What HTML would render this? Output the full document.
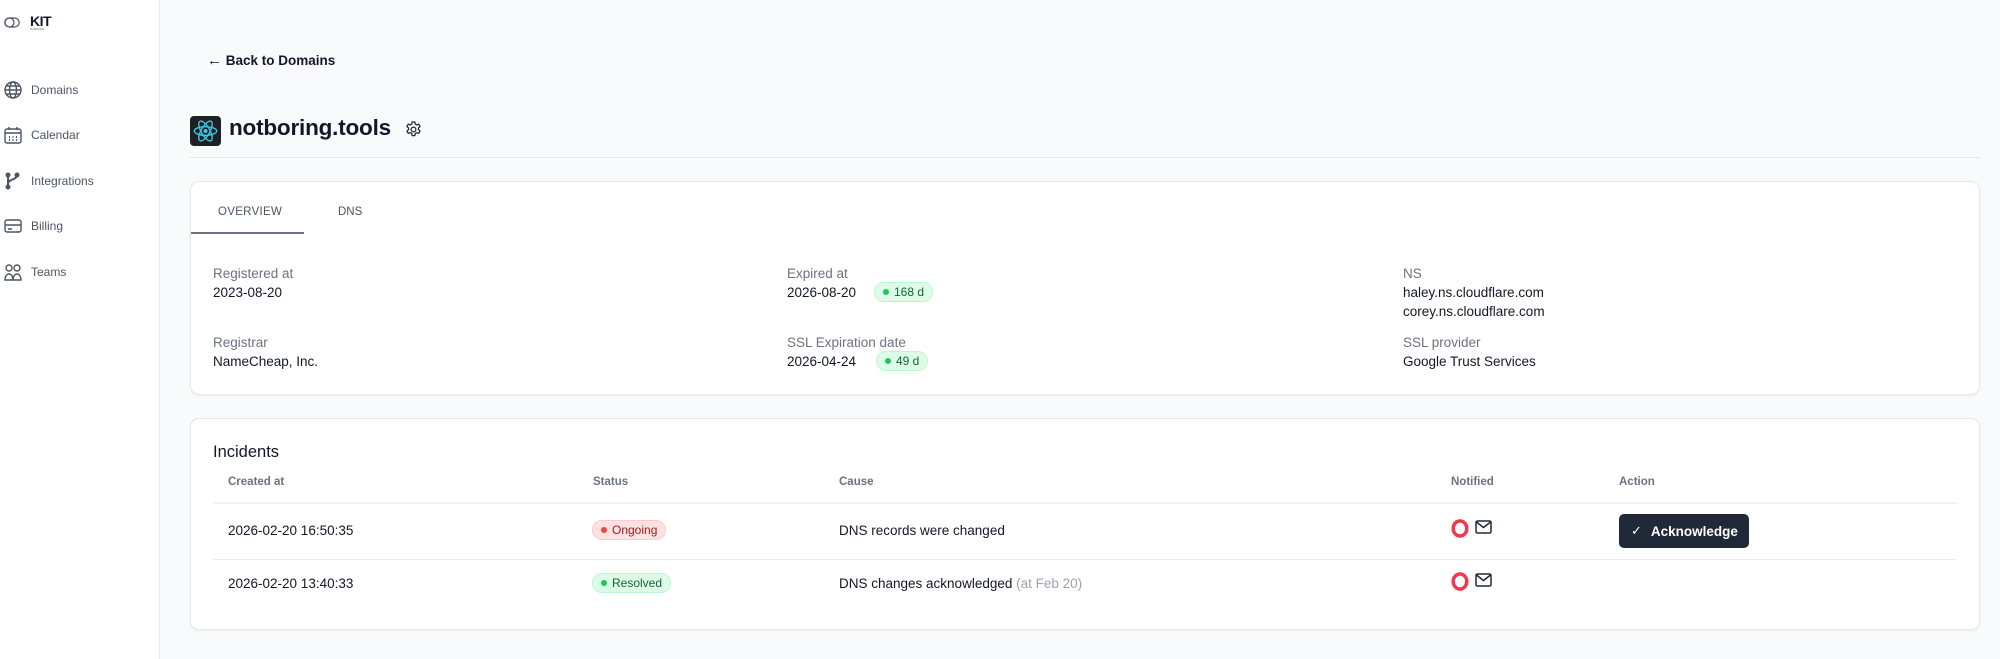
<!DOCTYPE html>
<html><head><meta charset="utf-8"><style>
*{box-sizing:border-box;margin:0;padding:0}
body{width:2000px;height:659px;background:#f9fafb;font-family:"Liberation Sans",sans-serif;color:#111827;position:relative;overflow:hidden}
.abs{position:absolute}
.side{left:0;top:0;width:160px;height:659px;background:#fff;border-right:1px solid #e5e7eb}
.nav{left:4px;display:flex;align-items:center;font-size:12px;color:#4b5563}
.nav svg{width:18px;height:18px;margin-right:9px;stroke:#4b5563;fill:none;stroke-width:1.4}
.card{background:#fff;border:1px solid #e5e7eb;border-radius:9px;box-shadow:0 1px 2px rgba(0,0,0,.05)}
.lbl{font-size:13.5px;color:#6b7280}
.val{font-size:13.5px;color:#111827}
.pill{display:inline-flex;align-items:center;height:20px;padding:0 8px;border-radius:10px;font-size:12px;border:1px solid}
.g{background:#dcfce7;border-color:#bbf7d0;color:#166534}
.r{background:#fee2e2;border-color:#fecaca;color:#991b1b}
.dot{width:6px;height:6px;border-radius:50%;margin-right:5px}
.th{font-size:11.5px;font-weight:bold;color:#6b7280;top:476px}
.td{font-size:13.5px}
</style></head><body>
<div class="abs side"></div>
<svg class="abs" style="left:4px;top:17px" width="16" height="11" viewBox="0 0 16 11"><rect x="0.8" y="1" width="14.4" height="9" rx="4.5" fill="none" stroke="#4b5563" stroke-width="1.2"/><circle cx="5.5" cy="5.5" r="4.5" fill="none" stroke="#4b5563" stroke-width="1.2"/></svg>
<div class="abs" style="left:30px;top:13px;font-size:14px;font-weight:bold;letter-spacing:-0.5px">KIT</div>
<div class="abs" style="left:30px;top:27px;font-size:3px;color:#666">DOMAINS</div>
<div class="abs nav" style="top:81px"><svg viewBox="0 0 18 18"><circle cx="9" cy="9" r="8"/><ellipse cx="9" cy="9" rx="3.5" ry="8"/><path d="M1 9h16M2.5 5h13M2.5 13h13"/></svg>Domains</div>
<div class="abs nav" style="top:126px"><svg viewBox="0 0 18 18"><rect x="1" y="3" width="16" height="14" rx="2"/><path d="M5 1v3M13 1v3M1 7h16"/><path d="M5 11h1M8.5 11h1M12 11h1M5 14h1M8.5 14h1M12 14h1" stroke-width="2"/></svg>Calendar</div>
<div class="abs nav" style="top:172px"><svg viewBox="0 0 18 18"><circle cx="4" cy="3" r="1.8" fill="#4b5563"/><circle cx="4" cy="15" r="1.8" fill="#4b5563"/><circle cx="13" cy="3" r="1.8" fill="#4b5563"/><path d="M4 3v12M13 3c0 5-9 4-9 9" stroke-width="2"/></svg>Integrations</div>
<div class="abs nav" style="top:217px"><svg viewBox="0 0 18 18"><rect x="1" y="3" width="16" height="12" rx="2"/><path d="M1 8h16M4 12h4"/></svg>Billing</div>
<div class="abs nav" style="top:263px"><svg viewBox="0 0 18 18"><circle cx="5" cy="5" r="3"/><circle cx="13" cy="5" r="3"/><path d="M1 17c0-4 2-6 4-6s4 2 4 6zM9 17c0-4 2-6 4-6s4 2 4 6z"/></svg>Teams</div>

<div class="abs" style="left:207px;top:52px;font-size:13.5px;font-weight:bold;color:#111827"><span style="font-size:15px">←</span> Back to Domains</div>
<div class="abs" style="left:190px;top:116px;width:31px;height:30px;background:#1f2024;border-radius:4px"></div>
<svg class="abs" style="left:191px;top:117px" width="29" height="28" viewBox="0 0 30 30"><g fill="none" stroke="#3bc7e6" stroke-width="1.5"><ellipse cx="15" cy="15" rx="12" ry="4.6"/><ellipse cx="15" cy="15" rx="12" ry="4.6" transform="rotate(60 15 15)"/><ellipse cx="15" cy="15" rx="12" ry="4.6" transform="rotate(120 15 15)"/></g><circle cx="15" cy="15" r="2.2" fill="#3bc7e6"/></svg>
<div class="abs" style="left:229px;top:115px;font-size:22.5px;font-weight:bold;color:#111827;letter-spacing:-0.2px">notboring.tools</div>
<svg class="abs" style="left:404px;top:120px" width="19" height="19" viewBox="0 0 24 24" fill="none" stroke="#1f2937" stroke-width="1.6"><path d="M10.3 2.5h3.4l.5 2.6 1.9 1.1 2.5-.9 1.7 2.9-2 1.8v2.2l2 1.8-1.7 2.9-2.5-.9-1.9 1.1-.5 2.6h-3.4l-.5-2.6-1.9-1.1-2.5.9-1.7-2.9 2-1.8v-2.2l-2-1.8 1.7-2.9 2.5.9 1.9-1.1z"/><circle cx="12" cy="12" r="3"/></svg>
<div class="abs" style="left:190px;top:157px;width:1790px;height:1px;background:#e5e7eb"></div>

<div class="abs card" style="left:190px;top:181px;width:1790px;height:214px"></div>
<div class="abs" style="left:218px;top:206px;font-size:11.5px;color:#4b5563;letter-spacing:.3px">OVERVIEW</div>
<div class="abs" style="left:338px;top:206px;font-size:11.5px;color:#4b5563">DNS</div>
<div class="abs" style="left:191px;top:232px;width:113px;height:2px;background:#6b7280"></div>
<div class="abs lbl" style="left:213px;top:266px">Registered at</div>
<div class="abs val" style="left:213px;top:285px">2023-08-20</div>
<div class="abs lbl" style="left:213px;top:335px">Registrar</div>
<div class="abs val" style="left:213px;top:354px">NameCheap, Inc.</div>
<div class="abs lbl" style="left:787px;top:266px">Expired at</div>
<div class="abs val" style="left:787px;top:285px">2026-08-20</div>
<div class="abs pill g" style="left:874px;top:282px"><span class="dot" style="background:#22c55e"></span>168 d</div>
<div class="abs lbl" style="left:787px;top:335px">SSL Expiration date</div>
<div class="abs val" style="left:787px;top:354px">2026-04-24</div>
<div class="abs pill g" style="left:876px;top:351px"><span class="dot" style="background:#22c55e"></span>49 d</div>
<div class="abs lbl" style="left:1403px;top:266px">NS</div>
<div class="abs val" style="left:1403px;top:285px">haley.ns.cloudflare.com</div>
<div class="abs val" style="left:1403px;top:304px">corey.ns.cloudflare.com</div>
<div class="abs lbl" style="left:1403px;top:335px">SSL provider</div>
<div class="abs val" style="left:1403px;top:354px">Google Trust Services</div>

<div class="abs card" style="left:190px;top:418px;width:1790px;height:212px"></div>
<div class="abs" style="left:213px;top:443px;font-size:16.5px;color:#111827">Incidents</div>
<div class="abs th" style="left:228px">Created at</div>
<div class="abs th" style="left:593px">Status</div>
<div class="abs th" style="left:839px">Cause</div>
<div class="abs th" style="left:1451px">Notified</div>
<div class="abs th" style="left:1619px">Action</div>
<div class="abs" style="left:213px;top:502px;width:1743px;height:2px;background:#f0f1f3"></div>
<div class="abs" style="left:213px;top:559px;width:1743px;height:1px;background:#ececef"></div>
<div class="abs td" style="left:228px;top:523px">2026-02-20 16:50:35</div>
<div class="abs pill r" style="left:592px;top:520px"><span class="dot" style="background:#ef4444"></span>Ongoing</div>
<div class="abs td" style="left:839px;top:523px">DNS records were changed</div>
<div class="abs td" style="left:228px;top:576px">2026-02-20 13:40:33</div>
<div class="abs pill g" style="left:592px;top:573px"><span class="dot" style="background:#22c55e"></span>Resolved</div>
<div class="abs td" style="left:839px;top:576px">DNS changes acknowledged <span style="color:#9ca3af">(at Feb 20)</span></div>
<svg class="abs" style="left:1450px;top:518px" width="20" height="21" viewBox="0 0 20 21"><ellipse cx="10" cy="10.5" rx="6.8" ry="7.5" fill="none" stroke="#f0384f" stroke-width="3.5"/></svg>
<svg class="abs" style="left:1475px;top:520px" width="17" height="14" viewBox="0 0 17 14" fill="none" stroke="#1f2937" stroke-width="1.5"><rect x="1" y="1" width="15" height="12" rx="1.5"/><path d="M1.5 2l7 5.5 7-5.5"/></svg>
<svg class="abs" style="left:1450px;top:571px" width="20" height="21" viewBox="0 0 20 21"><ellipse cx="10" cy="10.5" rx="6.8" ry="7.5" fill="none" stroke="#f0384f" stroke-width="3.5"/></svg>
<svg class="abs" style="left:1475px;top:573px" width="17" height="14" viewBox="0 0 17 14" fill="none" stroke="#1f2937" stroke-width="1.5"><rect x="1" y="1" width="15" height="12" rx="1.5"/><path d="M1.5 2l7 5.5 7-5.5"/></svg>
<div class="abs" style="left:1619px;top:514px;width:130px;height:34px;background:#1f2937;border-radius:5px;color:#fff;font-size:13.5px;font-weight:bold;display:flex;align-items:center;padding-left:12px"><span style="font-weight:normal;margin-right:9px;font-size:13px">✓</span>Acknowledge</div>
</body></html>
